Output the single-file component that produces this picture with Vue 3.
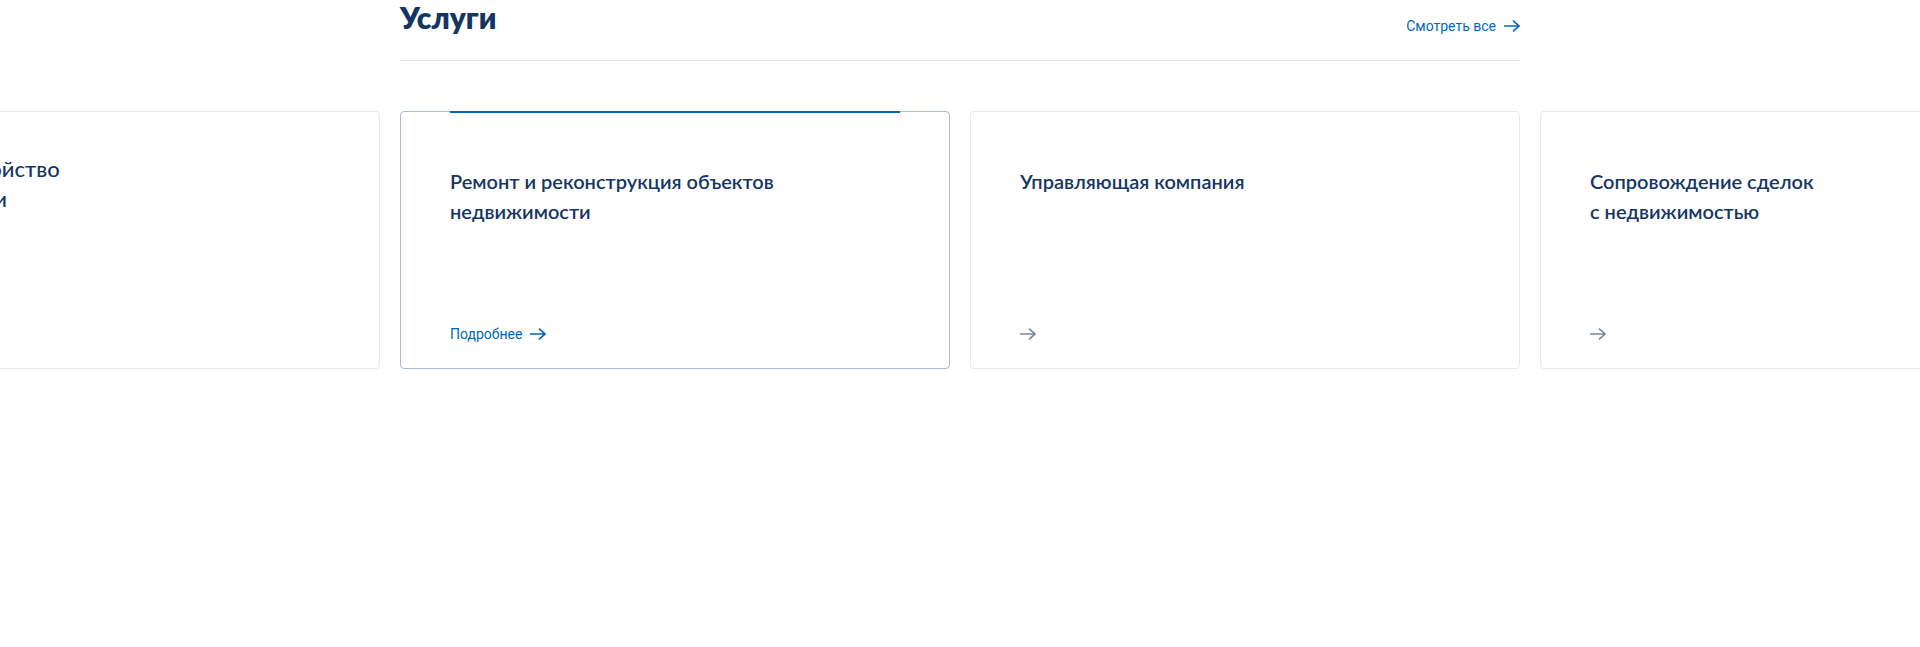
<script setup>
const services = [
  { title: ['Благоустройство', 'территории'], plain: true },
  { title: ['Ремонт и реконструкция объектов', 'недвижимости'], active: true },
  { title: ['Управляющая компания'] },
  { title: ['Сопровождение сделок', 'с недвижимостью'] },
]
</script>

<template>
  <section class="services">
    <div class="container">
      <header class="head">
        <h2>Услуги</h2>
        <a href="#all" class="link all">
          <span>Смотреть все</span>
          <svg class="arrow" viewBox="0 0 16 12" aria-hidden="true"><path d="M0 6H15M9 .6 15 6l-6 5.400" /></svg>
        </a>
      </header>
      <div class="rail">
        <article v-for="s in services" :key="s.title[0]" class="card" :class="{ active: s.active, plain: s.plain }">
          <h3><span v-for="line in s.title" :key="line">{{ line }}</span></h3>
          <a v-if="!s.plain" href="#service" class="link" :aria-label="s.title.join(' ')">
            <span v-if="s.active">Подробнее</span>
            <svg class="arrow" viewBox="0 0 16 12" aria-hidden="true"><path d="M0 6H15M9 .6 15 6l-6 5.400" /></svg>
          </a>
        </article>
      </div>
    </div>
  </section>
</template>

<style>
body {
  margin: 0;
  background: #fff;
}
</style>

<style scoped>
.services {
  overflow: hidden;
  font-family: Roboto, "Liberation Sans", sans-serif;
  color: #153665;
}
.container {
  width: 100%;
  max-width: 1120px;
  margin: 0 auto;
}
.head {
  display: flex;
  justify-content: space-between;
  align-items: flex-end;
  padding-bottom: 24px;
  border-bottom: 1px solid #e4e7eb;
}
h2, h3 {
  margin: 0;
  font-family: Lato, "Open Sans", sans-serif;
}
h2 {
  padding-bottom: 2px;
  font-size: 30px;
  line-height: 34px;
  font-weight: 800;
}
.link {
  display: flex;
  align-items: center;
  gap: 8px;
  min-height: 20px;
  font-size: 14px;
  line-height: 20px;
  color: #7b8797;
  text-decoration: none;
}
.all {
  color: #0068c9;
}
.arrow {
  width: 16px;
  height: 12px;
  fill: none;
  stroke: currentColor;
  stroke-width: 1.6;
}
.rail {
  display: grid;
  grid-auto-flow: column;
  grid-auto-columns: calc((100% - 20px) / 2);
  gap: 20px;
  justify-content: center;
  margin-top: 50px;
}
.card {
  position: relative;
  box-sizing: border-box;
  min-height: 258px;
  padding: 54px 49px 24px;
  border: 1px solid #e6e8ec;
  border-radius: 4px;
  display: flex;
  flex-direction: column;
  justify-content: space-between;
  align-items: flex-start;
}
.card.plain {
  padding: 42px 55px 24px;
}
h3 {
  font-size: 20px;
  line-height: 30px;
  font-weight: 600;
}
h3 span {
  display: block;
  white-space: nowrap;
}
.plain h3 {
  font-size: 22px;
  font-weight: 500;
}
.active {
  border-color: #a9bad2;
}
.active::before {
  content: "";
  position: absolute;
  top: -1px;
  left: 49px;
  right: 49px;
  height: 2px;
  background: #0066b3;
}
.active .link {
  color: #0066b3;
}
</style>
